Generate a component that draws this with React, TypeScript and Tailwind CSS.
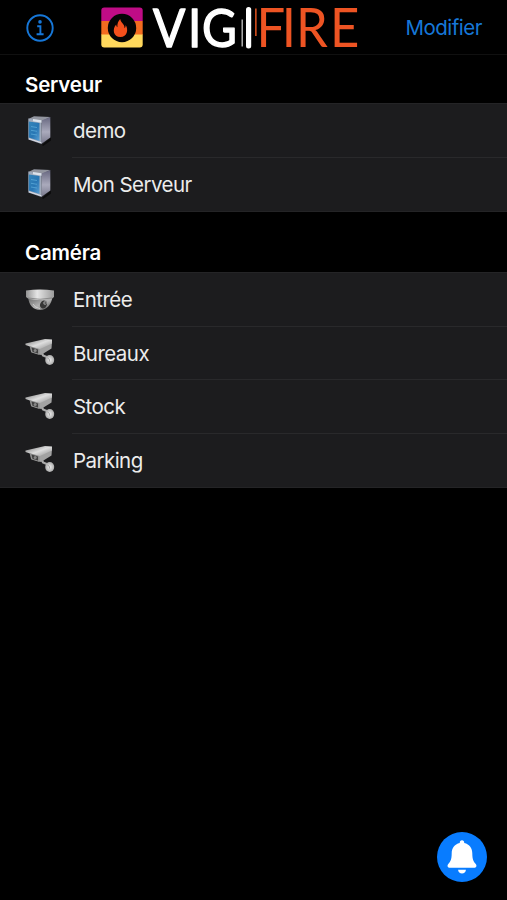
type Kind = "server" | "dome" | "bullet";

function InfoIcon() {
  return (
    <svg viewBox="0 0 28 28" className="mt-0.5 h-7 w-7" fill="none" stroke="#1677d8">
      <circle cx="14" cy="14" r="12.7" strokeWidth="1.9" />
      <circle cx="14" cy="7.9" r="1.8" fill="#1677d8" stroke="none" />
      <path d="M11.2 12.2h3.2v8M10.6 20.3h7" strokeWidth="1.9" />
    </svg>
  );
}

function Logo() {
  return (
    <svg viewBox="0 -11 260 66" className="h-[66px] w-[260px]" fontFamily="Lato, sans-serif">
      <defs>
        <clipPath id="badge">
          <rect x="1.3" y="2.5" width="41.4" height="40" rx="3" />
        </clipPath>
      </defs>
      <g clipPath="url(#badge)">
        <rect x="1" y="2" width="42" height="14" fill="#c00c86" />
        <rect x="1" y="16" width="42" height="14" fill="#f36b20" />
        <rect x="1" y="29.5" width="42" height="14" fill="#ffd85c" />
      </g>
      <circle cx="22" cy="23" r="14.2" fill="#050505" />
      <path
        d="M20.2 14c.5 4 4.7 5 4.3 9.2 1-.8 1.2-2 1.100-3.200 3.200 4.500 1.500 12-5.100 12-7.300 0-8.500-8-4.300-12.500.1 1.500.5 2.300 1.200 2.800-.3-3.500.8-6.300 2.800-8.300z"
        fill="#f4501c"
      />
      <text
        transform="translate(53 41.5) scale(.9 1)"
        x="0 39 54.5"
        y="0"
        fontSize="53"
        fill="#fff"
        stroke="#fff"
        strokeWidth="1.4"
        strokeLinejoin="round"
      >
        VIG
      </text>
      <rect x="141.5" y="14.5" width="1.4" height="27" fill="#bbb" />
      <rect x="146" y="2" width="5.2" height="41.5" rx="2.5" fill="#fff" />
      <rect x="155" y="3.5" width="1.7" height="27.5" fill="#c84a1c" />
      <text
        transform="translate(156.5 41.5) scale(.95 1)"
        x="0 26.5 41.5 77.5"
        y="0"
        fontSize="53.5"
        fill="#ee5423"
      >
        FIRE
      </text>
    </svg>
  );
}

function ServerIcon() {
  return (
    <svg viewBox="0 0 30 34" className="h-[34px] w-[30px]">
      <defs>
        <linearGradient id="blue" x1="0" y1="0" x2="1" y2="1">
          <stop offset="0" stopColor="#3585ba" />
          <stop offset=".55" stopColor="#2876b4" />
          <stop offset="1" stopColor="#5b9fd2" />
        </linearGradient>
        <linearGradient id="side" x1="0" y1="0" x2="0" y2="1">
          <stop offset="0" stopColor="#66667f" />
          <stop offset=".55" stopColor="#aaaabc" />
          <stop offset="1" stopColor="#77778b" />
        </linearGradient>
      </defs>
      <path d="M17 31 26 23.5v3L18 32z" fill="#0c0c0d" />
      <path d="M3.3 5 9 2.2 25.3 3 17.5 7z" fill="#92959f" />
      <path d="M16.5 6.5 25.3 3v20.5l-9 6.5z" fill="url(#side)" />
      <path d="M3.3 4.5 16.5 6.5V30L3.3 25.5z" fill="#a0aabb" />
      <path d="M3.8 7.5 14.5 9V27L3.8 23.5z" fill="url(#blue)" />
      <path d="M6 12.5l6 1M6 16.3l6 1M6 20l6 1" stroke="#5ba8d8" strokeWidth=".8" />
      <path d="m8 5 8.5 1.2v2.5L8 7.3z" fill="#dce2eb" />
      <path d="m4 24.8 12.5 4" stroke="#dcdde5" />
    </svg>
  );
}

function DomeIcon() {
  return (
    <svg viewBox="0 0 30 24" className="h-6 w-[30px]">
      <defs>
        <linearGradient id="rim" x1="0" x2="1">
          <stop offset="0" stopColor="#929292" />
          <stop offset=".4" stopColor="#e6e6e6" />
          <stop offset="1" stopColor="#9b9b9b" />
        </linearGradient>
        <linearGradient id="dome" x1="0" x2="1" y2="1">
          <stop offset="0" stopColor="#666" />
          <stop offset=".55" stopColor="#b2b2b2" />
          <stop offset="1" stopColor="#4b4b4b" />
        </linearGradient>
      </defs>
      <path d="M3 9c1 8 5 13 12 13S26.5 16 27.5 9z" fill="url(#dome)" />
      <path d="M1 2.5Q15 .5 29 2.5V9Q27 12 15 12T1 9z" fill="url(#rim)" />
      <path d="M3 10q12 2.5 24 0" stroke="#777" strokeWidth=".7" fill="none" />
      <ellipse cx="18.5" cy="16.5" rx="3.3" ry="4" fill="#363636" transform="rotate(25 18.5 16.5)" />
      <circle cx="20" cy="15" r="1.7" fill="#aaa" />
      <circle cx="20.2" cy="15" r=".8" fill="#222" />
      <path d="M8 16q2 4 7 4.5" stroke="#ccc" fill="none" />
    </svg>
  );
}

function BulletIcon() {
  return (
    <svg viewBox="0 0 30 28" className="h-7 w-[30px]">
      <defs>
        <linearGradient id="housing" x1="0" y1="0" x2="1" y2="1">
          <stop offset="0" stopColor="#777" />
          <stop offset=".5" stopColor="#dedede" />
          <stop offset="1" stopColor="#888" />
        </linearGradient>
        <radialGradient id="mount">
          <stop offset="0" stopColor="#eee" />
          <stop offset="1" stopColor="#aaa" />
        </radialGradient>
      </defs>
      <path d="m16.5 14 1.5 3.5 5 2" stroke="#aaa" strokeWidth="2.2" fill="none" />
      <path d="m5 7 10 3 12-6-.5 6.500L16 17l-10-3z" fill="#a2a2a2" />
      <path d="M.5 5.5 20 1l7 .5v4L14 11.500.5 7z" fill="url(#housing)" />
      <path d="m4.500 8 10 3v6L6.500 14.500z" fill="#8f8f8f" />
      <path d="m6.500 9.500 6.500 2v4L7.500 13.800z" fill="#414141" />
      <circle cx="10.2" cy="12.5" r="1.5" fill="#888" />
      <ellipse cx="24.7" cy="22" rx="4.5" ry="5" fill="url(#mount)" />
      <path d="m22.5 20 2 1.500v2" stroke="#999" strokeWidth=".8" fill="none" />
    </svg>
  );
}

function Row({ kind, label, last }: { kind: Kind; label: string; last?: boolean }) {
  return (
    <li className="flex h-[53.5px] items-stretch pl-[25px]">
      <div className="flex w-[47px] items-center">
        {kind === "server" && <ServerIcon />}
        {kind === "dome" && <DomeIcon />}
        {kind === "bullet" && <div className="-mt-0.5"><BulletIcon /></div>}
      </div>
      <div className={`flex flex-1 items-center pl-px pt-[3px] text-[20.5px] tracking-[-0.55px] text-[#ececec] ${last ? "" : "border-b border-[#29292b]"}`}>
        {label}
      </div>
    </li>
  );
}

export default function App() {
  return (
    <main className="relative flex h-[900px] w-[507px] flex-col overflow-hidden bg-black font-[Inter,'Liberation_Sans',sans-serif] text-white">
      <header className="flex h-[55px] shrink-0 items-center border-b border-[#101010] pl-[26px] pr-[25px]">
        <InfoIcon />
        <div className="ml-[46px]"><Logo /></div>
        <button className="ml-auto pt-[3px] text-[20.5px] tracking-[-0.5px] text-[#1677d8]">Modifier</button>
      </header>
      <h2 className="flex h-12 items-center pl-[25px] pt-3 text-[20.5px] font-semibold tracking-[-0.2px]">Serveur</h2>
      <ul className="border-y border-[#242426] bg-[#1c1c1e]">
        <Row kind="server" label="demo" />
        <Row kind="server" label="Mon Serveur" last />
      </ul>
      <h2 className="flex h-[60px] items-end pb-[3px] pl-[25px] text-[20.5px] font-semibold tracking-[-0.2px]">Caméra</h2>
      <ul className="border-y border-[#242426] bg-[#1c1c1e]">
        <Row kind="dome" label="Entrée" />
        <Row kind="bullet" label="Bureaux" />
        <Row kind="bullet" label="Stock" />
        <Row kind="bullet" label="Parking" last />
      </ul>
      <button aria-label="Notifications" className="absolute bottom-[18px] right-[20px] flex h-[50px] w-[50px] items-center justify-center rounded-full bg-[#087cff]">
        <svg viewBox="0 0 51 51" className="h-[50px] w-[50px]" fill="#fff">
          <path d="M25.5 8.5c1.5 0 2.3 1.1 2.3 2.8 5.5 1.3 8.2 5.4 8.2 10.5 0 7 1.5 8.700 3.300 10.600 1.800 2 .9 4.100-1.600 4.100H13.300c-2.500 0-3.400-2.100-1.600-4.100 1.800-1.900 3.300-3.600 3.300-10.600 0-5.100 2.700-9.200 8.200-10.500 0-1.700.8-2.800 2.300-2.800z" />
          <path d="M21.5 38.5h8c-.3 2.500-1.800 3.900-4 3.900s-3.700-1.400-4-3.900z" />
        </svg>
      </button>
    </main>
  );
}
